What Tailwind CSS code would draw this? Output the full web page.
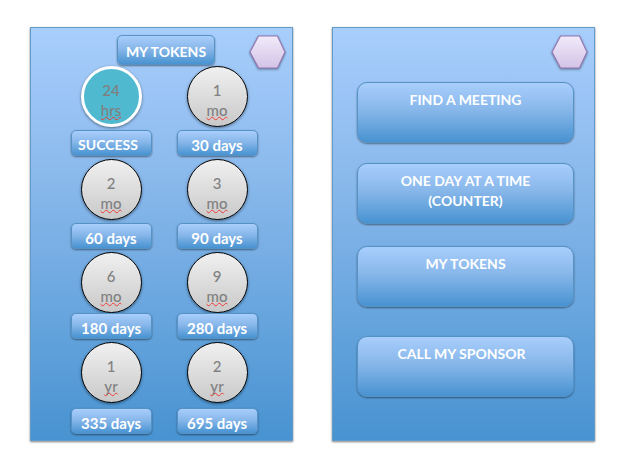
<!DOCTYPE html>
<html lang="en">
<head>
<meta charset="utf-8">
<meta name="viewport" content="width=device-width, initial-scale=1">
<title>My Tokens</title>
<script src="https://cdn.jsdelivr.net/npm/@tailwindcss/browser@4"></script>
<style>
.squiggle{text-decoration:underline wavy #ee3a36 1px;text-decoration-skip-ink:none;text-underline-offset:0px}
.key{background-image:linear-gradient(#a8cefc,#88b7ea 45%,#4893d1)}
.panel{background-image:linear-gradient(#a8cefc,#8ab9ec 36%,#4893d1)}
.token{background-image:linear-gradient(#f0f0f0,#c9c9c9)}
</style>
</head>
<body class="bg-white font-[Lato,Carlito,sans-serif] text-[15px] leading-5">
<main class="flex gap-[39px] pt-[27px] pr-7 pb-6 pl-[30px]">

  <section class="panel flex-1 border border-[#629bc9] pb-1.5 shadow-[0_1px_2px_rgba(0,0,0,0.5)]" aria-label="My tokens">
    <header class="grid grid-cols-[1fr_auto_1fr] items-start pt-[7px] pr-1.5">
      <h1 class="key col-start-2 ml-[15px] h-[30px] rounded-[5px] border border-[#5592c6] px-2 pt-1.5 text-sm font-bold text-white shadow-[0_1px_2px_rgba(0,0,0,0.45)]">MY TOKENS</h1>
      <button type="button" aria-label="Menu" class="justify-self-end">
        <svg class="block h-[35px] w-[37px] drop-shadow-[0_1px_1px_rgba(0,0,0,0.4)]" viewBox="0 0 37 35"><defs><linearGradient id="hexA" x2="0" y2="1"><stop stop-color="#f1ebfa"/><stop offset="1" stop-color="#d3c2e6"/></linearGradient></defs><path d="M1 17 9.500 1h19L36 17l-7.500 16h-19Z" fill="url(#hexA)" stroke="#9278b4" stroke-width="1.200"/></svg>
      </button>
    </header>

    <ul class="-mt-1 grid grid-cols-[81px_81px] justify-center gap-x-[25px] gap-y-[3px] pl-[5px]">
      <li class="flex flex-col items-center gap-[3px]">
        <div class="h-[61px] w-[61px] rounded-full border-3 border-white bg-[#4fb9cf] pt-[11px] text-center font-medium text-[#808080] shadow-[0_1px_3px_rgba(0,0,0,0.45)]">24<br><span class="squiggle">hrs</span></div>
        <button type="button" class="key h-[26px] w-full rounded-[5px] border border-[#5592c6] pt-1 pr-1.5 text-sm font-bold text-white shadow-[0_1px_2px_rgba(0,0,0,0.45)]">SUCCESS</button>
      </li>
      <li class="flex flex-col items-center gap-[3px]">
        <div class="token h-[61px] w-[61px] rounded-full border border-black pt-[13px] text-center font-medium text-[#808080] shadow-[0_1px_3px_rgba(0,0,0,0.45)]">1<br><span class="squiggle">mo</span></div>
        <button type="button" class="key h-[26px] w-full rounded-[5px] border border-[#5592c6] pt-1 font-bold text-white shadow-[0_1px_2px_rgba(0,0,0,0.45)]">30 days</button>
      </li>
      <li class="flex flex-col items-center gap-[3px]">
        <div class="token h-[61px] w-[61px] rounded-full border border-black pt-[13px] text-center font-medium text-[#808080] shadow-[0_1px_3px_rgba(0,0,0,0.45)]">2<br><span class="squiggle">mo</span></div>
        <button type="button" class="key h-[26px] w-full rounded-[5px] border border-[#5592c6] pt-1 font-bold text-white shadow-[0_1px_2px_rgba(0,0,0,0.45)]">60 days</button>
      </li>
      <li class="flex flex-col items-center gap-[3px]">
        <div class="token h-[61px] w-[61px] rounded-full border border-black pt-[13px] text-center font-medium text-[#808080] shadow-[0_1px_3px_rgba(0,0,0,0.45)]">3<br><span class="squiggle">mo</span></div>
        <button type="button" class="key h-[26px] w-full rounded-[5px] border border-[#5592c6] pt-1 font-bold text-white shadow-[0_1px_2px_rgba(0,0,0,0.45)]">90 days</button>
      </li>
      <li class="flex flex-col items-center">
        <div class="token h-[61px] w-[61px] rounded-full border border-black pt-[13px] text-center font-medium text-[#808080] shadow-[0_1px_3px_rgba(0,0,0,0.45)]">6<br><span class="squiggle">mo</span></div>
        <button type="button" class="key h-[26px] w-full rounded-[5px] border border-[#5592c6] pt-1 font-bold text-white shadow-[0_1px_2px_rgba(0,0,0,0.45)]">180 days</button>
      </li>
      <li class="flex flex-col items-center">
        <div class="token h-[61px] w-[61px] rounded-full border border-black pt-[13px] text-center font-medium text-[#808080] shadow-[0_1px_3px_rgba(0,0,0,0.45)]">9<br><span class="squiggle">mo</span></div>
        <button type="button" class="key h-[26px] w-full rounded-[5px] border border-[#5592c6] pt-1 font-bold text-white shadow-[0_1px_2px_rgba(0,0,0,0.45)]">280 days</button>
      </li>
      <li class="flex flex-col items-center gap-[5px]">
        <div class="token h-[61px] w-[61px] rounded-full border border-black pt-[13px] text-center font-medium text-[#808080] shadow-[0_1px_3px_rgba(0,0,0,0.45)]">1<br><span class="squiggle">yr</span></div>
        <button type="button" class="key h-[26px] w-full rounded-[5px] border border-[#5592c6] pt-1 font-bold text-white shadow-[0_1px_2px_rgba(0,0,0,0.45)]">335 days</button>
      </li>
      <li class="flex flex-col items-center gap-[5px]">
        <div class="token h-[61px] w-[61px] rounded-full border border-black pt-[13px] text-center font-medium text-[#808080] shadow-[0_1px_3px_rgba(0,0,0,0.45)]">2<br><span class="squiggle">yr</span></div>
        <button type="button" class="key h-[26px] w-full rounded-[5px] border border-[#5592c6] pt-1 font-bold text-white shadow-[0_1px_2px_rgba(0,0,0,0.45)]">695 days</button>
      </li>
    </ul>
  </section>

  <section class="panel flex-1 border border-[#629bc9] shadow-[0_1px_2px_rgba(0,0,0,0.5)]" aria-label="Main menu">
    <header class="flex justify-end pt-[7px] pr-1.5">
      <button type="button" aria-label="Menu">
        <svg class="block h-[35px] w-[37px] drop-shadow-[0_1px_1px_rgba(0,0,0,0.4)]" viewBox="0 0 37 35"><defs><linearGradient id="hexB" x2="0" y2="1"><stop stop-color="#f1ebfa"/><stop offset="1" stop-color="#d3c2e6"/></linearGradient></defs><path d="M1 17 9.500 1h19L36 17l-7.500 16h-19Z" fill="url(#hexB)" stroke="#9278b4" stroke-width="1.200"/></svg>
      </button>
    </header>
    <nav class="flex flex-col pt-3 pr-5 pl-6 text-sm/5 font-bold text-white">
      <button type="button" class="key flex h-[61px] items-start justify-center rounded-[10px] border border-[#5592c6] pt-[7px] shadow-[0_1px_2px_rgba(0,0,0,0.45)]">FIND A MEETING</button>
      <button type="button" class="key mt-5 flex h-[61px] items-start justify-center rounded-[10px] border border-[#5592c6] pt-[7px] shadow-[0_1px_2px_rgba(0,0,0,0.45)]"><span>ONE DAY AT A TIME<br>(COUNTER)</span></button>
      <button type="button" class="key mt-[22px] flex h-[61px] items-start justify-center rounded-[10px] border border-[#5592c6] pt-[7px] shadow-[0_1px_2px_rgba(0,0,0,0.45)]">MY TOKENS</button>
      <button type="button" class="key mt-[29px] flex h-[61px] items-start justify-center rounded-[10px] border border-[#5592c6] pt-[7px] pr-2 shadow-[0_1px_2px_rgba(0,0,0,0.45)]">CALL MY SPONSOR</button>
    </nav>
  </section>

</main>
</body>
</html>
